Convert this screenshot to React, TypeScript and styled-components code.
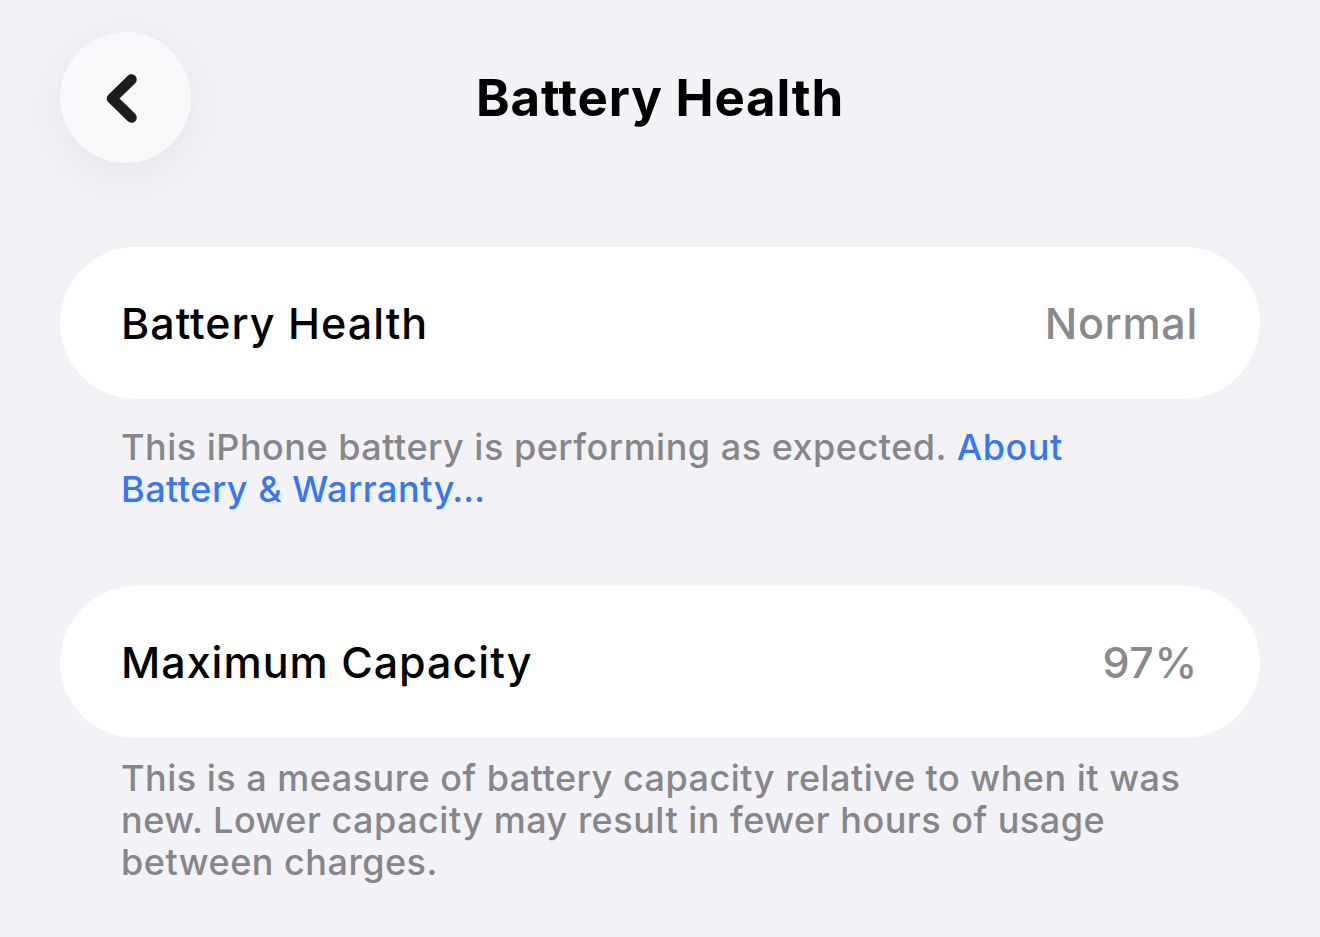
import React from 'react';
import styled, { createGlobalStyle } from 'styled-components';

const GlobalStyle = createGlobalStyle`
  html, body {
    margin: 0;
    padding: 0;
    background: #f2f2f7;
  }
  body {
    font-family: Inter, "Noto Sans", "Liberation Sans", sans-serif;
    -webkit-font-smoothing: antialiased;
  }
`;

const Page = styled.div`
  width: 1200px;
  padding: 32px 60px 0 60px;
  min-height: 937px;
  box-sizing: content-box;
`;

const Header = styled.header`
  display: grid;
  grid-template-columns: 131px 1fr 131px;
  align-items: center;
  height: 131px;
`;

const BackButton = styled.button`
  width: 131px;
  height: 131px;
  border-radius: 50%;
  border: none;
  padding: 0;
  background: #f9f9fc;
  box-shadow: 0 12px 48px rgba(60, 60, 80, 0.07);
  display: flex;
  align-items: center;
  justify-content: center;
  cursor: pointer;
`;

const Title = styled.h1`
  margin: 0;
  text-align: center;
  font-size: 51px;
  font-weight: 700;
  letter-spacing: 0.8px;
  color: #000;
`;

const Section = styled.section<{ $top: number }>`
  margin-top: ${({ $top }) => $top}px;
`;

const Card = styled.div`
  height: 152px;
  border-radius: 76px;
  background: #fff;
  display: flex;
  align-items: center;
  justify-content: space-between;
  padding: 0 62px 0 61px;
`;

const Label = styled.span`
  font-size: 43px;
  font-weight: 500;
  color: #000;
  letter-spacing: 1px;
`;

const Value = styled.span`
  font-size: 43px;
  font-weight: 500;
  color: #8a8a8e;
  letter-spacing: 0.7px;
`;

const Footnote = styled.p<{ $gap: number }>`
  margin: ${({ $gap }) => $gap}px 0 0;
  padding: 0 72px 0 61px;
  font-size: 36px;
  line-height: 42px;
  font-weight: 500;
  letter-spacing: 0.5px;
  color: #86868b;
`;

const Link = styled.a`
  color: #3478f6;
  text-decoration: none;
`;

const Chevron = () => (
  <svg width="40" height="56" viewBox="106 70 40 56" fill="none">
    <path
      d="M131.5 79.5 L112 98.5 L131.5 117.5"
      stroke="#1c1c1e"
      strokeWidth="10.5"
      strokeLinecap="round"
      strokeLinejoin="round"
    />
  </svg>
);

export default function App() {
  return (
    <>
      <GlobalStyle />
      <Page>
        <Header>
          <BackButton aria-label="Back">
            <Chevron />
          </BackButton>
          <Title>Battery Health</Title>
          <span />
        </Header>

        <Section $top={84}>
          <Card>
            <Label>Battery Health</Label>
            <Value>Normal</Value>
          </Card>
          <Footnote $gap={27}>
            This iPhone battery is performing as expected.{' '}
            <Link href="#">About Battery &amp; Warranty…</Link>
          </Footnote>
        </Section>

        <Section $top={76}>
          <Card>
            <Label>Maximum Capacity</Label>
            <Value>97%</Value>
          </Card>
          <Footnote $gap={19}>
            This is a measure of battery capacity relative to when it was new. Lower
            capacity may result in fewer hours of usage between charges.
          </Footnote>
        </Section>
      </Page>
    </>
  );
}
